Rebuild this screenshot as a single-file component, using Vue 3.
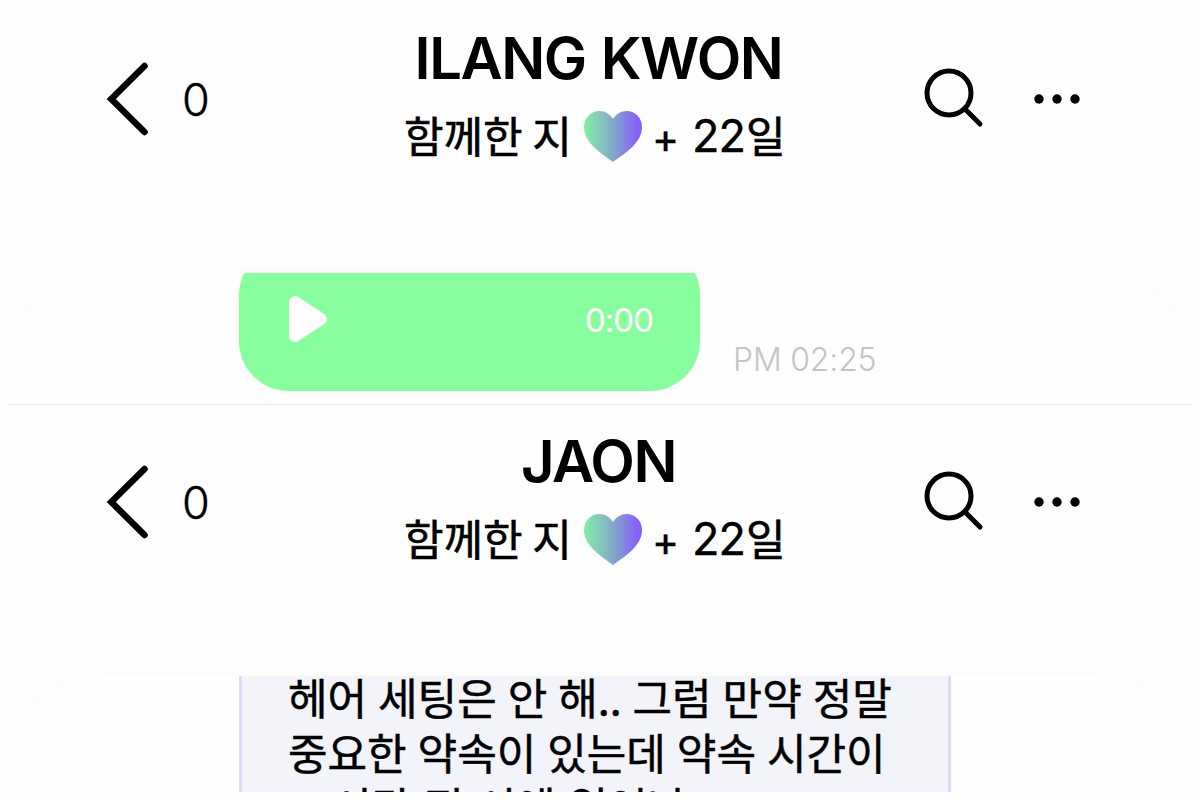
<template>
  <main class="screen">
    <section v-for="chat in chats" :key="chat.name" class="chat">
      <header class="bar">
        <div class="back">
          <svg class="chevron" viewBox="0 0 44 76" aria-hidden="true">
            <path d="M38.500 5L5.300 38L38.500 71" />
          </svg>
          <span class="count">{{ chat.unread }}</span>
        </div>
        <div class="heading">
          <h1>{{ chat.name }}</h1>
          <p class="since">
            <span class="ko">함께한 지</span>
            <svg class="heart" viewBox="0 0 58 51" aria-hidden="true">
              <defs>
                <linearGradient :id="'heart-' + chat.name.length" x1="0" x2="1" y1="0" y2="0">
                  <stop offset="0" stop-color="#83efa3" />
                  <stop offset="0.5" stop-color="#82a9cb" />
                  <stop offset="0.92" stop-color="#8560fa" />
                </linearGradient>
              </defs>
              <path
                :fill="`url(#heart-${chat.name.length})`"
                d="M29 8C26 3 21 0 15.500 0C6.500 0 0 7 0 16C0 31 15 41 29 51C43 41 58 31 58 16C58 7 51.500 0 42.500 0C37 0 32 3 29 8Z"
              />
            </svg>
            <span class="plus">+</span>
            <span class="days">{{ chat.days }}</span>
            <span class="ko">일</span>
          </p>
        </div>
        <div class="tools">
          <svg class="search" viewBox="0 0 60 60" aria-hidden="true">
            <circle cx="25" cy="25" r="22" />
            <path d="M41 41L56 56" />
          </svg>
          <svg class="more" viewBox="0 0 46 10" aria-hidden="true">
            <circle cx="5" cy="5" r="4.700" />
            <circle cx="23" cy="5" r="4.700" />
            <circle cx="41" cy="5" r="4.700" />
          </svg>
        </div>
      </header>

      <div class="body">
        <div v-if="chat.voice" class="voice-row">
          <div class="voice">
            <svg class="play" viewBox="0 0 40 48" aria-hidden="true">
              <path d="M7 7V41L33 24Z" />
            </svg>
            <span>{{ chat.voice }}</span>
          </div>
          <time>{{ chat.time }}</time>
        </div>
        <div v-else class="message">
          <p v-for="line in chat.lines" :key="line">{{ line }}</p>
        </div>
      </div>
    </section>
  </main>
</template>

<script setup>
const chats = [
  { name: 'ILANG KWON', unread: 0, days: 22, voice: '0:00', time: 'PM 02:25' },
  {
    name: 'JAON',
    unread: 0,
    days: 22,
    lines: ['헤어 세팅은 안 해.. 그럼 만약 정말', '중요한 약속이 있는데 약속 시간이', '10시간 전 시에 일어나???'],
  },
]
</script>

<style>
body { margin: 0; background: #fff; }
</style>

<style scoped>
.screen {
  box-sizing: border-box;
  width: 1200px;
  height: 800px;
  padding: 2px 8px 8px;
  overflow: hidden;
  background: #fefefe;
  color: #000;
  font-family: Inter, "Noto Sans CJK KR", sans-serif;
}
.chat { height: 403px; display: flex; flex-direction: column; overflow: hidden; box-sizing: border-box; }
.chat:first-child { border-bottom: 1px solid #e8e8e8; }
.chat:last-child { height: 387px; }

.bar { display: grid; grid-template-columns: 380px 424px 380px; height: 269px; flex: none; }
.back { display: flex; align-items: center; height: 76px; margin: 59px 0 0 98px; }
.chevron { width: 44px; height: 76px; fill: none; stroke: #000; stroke-width: 6.5; stroke-linecap: round; }
.count { margin: 2px 0 0 32px; font-size: 45px; font-weight: 300; line-height: 76px; -webkit-text-stroke: 0.4px #000; }

.heading { text-align: center; }
h1 { margin: 21px 3px 0 0; font-size: 58px; font-weight: 600; line-height: 70px; letter-spacing: -1.5px; word-spacing: 2px; white-space: nowrap; }
.since { display: flex; align-items: center; height: 60px; margin: 11px 0 0 16px; white-space: nowrap; }
.ko { font-family: "Noto Sans CJK KR", sans-serif; font-size: 43px; line-height: 60px; -webkit-text-stroke: 0.6px #000; }
.since .ko { margin-top: -1px; }
.heart { width: 58px; height: 51px; margin: 4px 10px 0 12px; }
.plus, .days { font-size: 45px; line-height: 60px; -webkit-text-stroke: 0.4px #000; }
.plus { width: 27px; margin: 7px 13px 0 0; font-size: 41px; }
.days { margin: 4px 1px 0 0; letter-spacing: -0.9px; }

.tools { display: flex; align-items: center; height: 60px; margin: 66px 0 0 112px; }
.search { width: 60px; height: 60px; fill: none; stroke: #000; stroke-width: 5; stroke-linecap: round; }
.more { width: 46px; height: 10px; margin: 2px 0 0 50px; }

.body {
  flex: 1;
  min-height: 0;
  overflow: hidden;
  box-sizing: border-box;
  border-top: 2px solid #fcfcfa;
  border-radius: 96px 96px 0 0;
  box-shadow: 0 -1px 4px #fbfbf8;
  padding-left: 231px;
}
.voice-row { display: flex; align-items: flex-end; height: 118px; }
.voice {
  box-sizing: border-box;
  width: 461px;
  height: 146px;
  padding: 28px 47px 0 49px;
  display: flex;
  align-items: center;
  justify-content: space-between;
  border-radius: 50px;
  background: #88ff9f;
  color: #fff;
  font-size: 33px;
  line-height: 40px;
}
.play { width: 40px; height: 48px; margin-top: -26px; fill: #fff; stroke: #fff; stroke-width: 12; stroke-linejoin: round; }
.voice span { margin-top: -25px; letter-spacing: -1px; }
time { margin: 0 0 11px 33px; color: #c4c4c4; font-size: 32px; font-weight: 300; line-height: 40px; letter-spacing: -0.2px; }

.message {
  box-sizing: border-box;
  width: 712px;
  height: 130px;
  padding: 0 0 0 46px;
  border: solid #dcd8f8;
  border-width: 0 3px;
  background: #f3f4f9;
}
.message p {
  margin: 0;
  font-family: "Noto Sans CJK KR", sans-serif;
  font-size: 43px;
  line-height: 55px;
  word-spacing: 1.3px;
  white-space: nowrap;
  position: relative;
  top: -7px;
  -webkit-text-stroke: 0.5px #000;
}
.message p:last-child { top: -5px; font-family: Inter, "Noto Sans CJK KR", sans-serif; letter-spacing: -0.2px; }
</style>
